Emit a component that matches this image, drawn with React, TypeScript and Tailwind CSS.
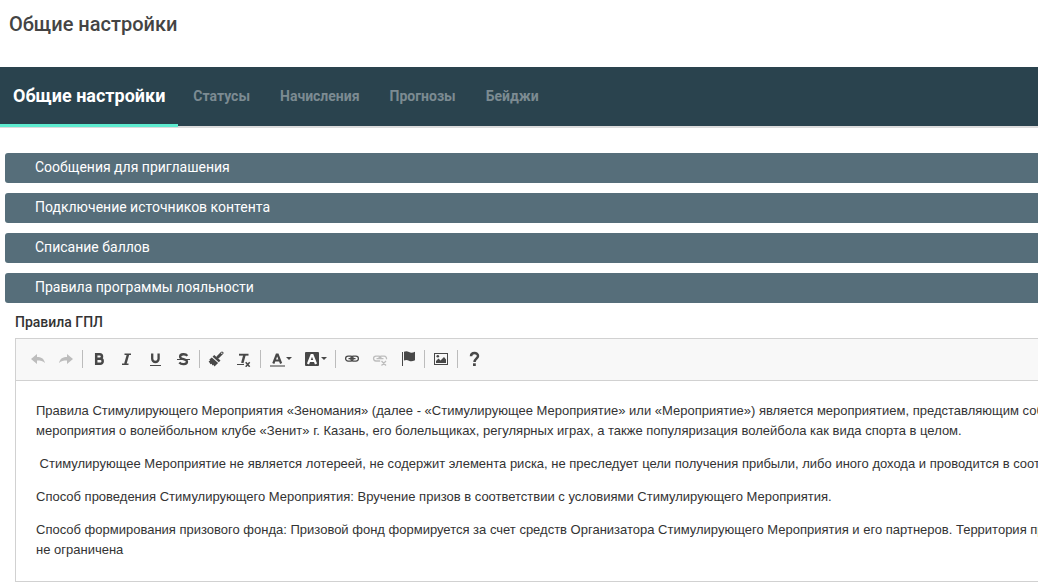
import { useState } from "react";
import type { ReactNode } from "react";

const TABS = ["Общие настройки", "Статусы", "Начисления", "Прогнозы", "Бейджи"];

const SECTIONS = [
    "Сообщения для приглашения",
    "Подключение источников контента",
    "Списание баллов",
    "Правила программы лояльности",
];

function Icon({ children }: { children: ReactNode }) {
    return (
        <svg width="16" height="16" viewBox="0 0 16 16" fill="none" stroke="none" aria-hidden="true">
            {children}
        </svg>
    );
}

function ToolButton({ label, disabled, children }: { label: string; disabled?: boolean; children: ReactNode }) {
    return (
        <button type="button" aria-label={label} title={label} disabled={disabled} className="flex h-7 w-7 items-center justify-center rounded-xs text-[#484848] enabled:hover:bg-[#e5e5e5] disabled:text-[#bdbdbd]">
            <Icon>{children}</Icon>
        </button>
    );
}

function MenuButton({ label, children }: { label: string; children: ReactNode }) {
    return (
        <button type="button" aria-label={label} title={label} aria-haspopup="true" className="flex h-7 w-[35px] items-center gap-px pl-1.5 rounded-xs text-[#484848] hover:bg-[#e5e5e5]">
            <Icon>{children}</Icon>
            <svg width="6" height="4" viewBox="0 0 6 4" fill="currentColor" aria-hidden="true"><path d="M0 0h6L3 3z" /></svg>
        </button>
    );
}

function Separator() {
    return <span className="mx-0.5 h-[18px] w-px bg-[#bcbcbc]" />;
}

function Toolbar() {
    return (
        <div role="toolbar" aria-label="Панель инструментов" className="flex h-[42px] items-center border-b border-[#d1d1d1] bg-[#f8f8f8] pb-px pl-2">
            <ToolButton label="Отменить" disabled>
                <path fill="currentColor" d="M1 8l6-5v3c4 0 7 1.500 8 6-2-2-4.500-2.500-8-2.500V13z" />
            </ToolButton>
            <ToolButton label="Повторить" disabled>
                <path fill="currentColor" d="M15 8L9 3v3c-4 0-7 1.500-8 6 2-2 4.500-2.500 8-2.500V13z" />
            </ToolButton>
            <Separator />
            <ToolButton label="Полужирный">
                <path stroke="currentColor" strokeWidth="2.500" d="M5.200 3.200h3.500a2.200 2.200 0 0 1 0 4.600H5.200h4a2.400 2.400 0 0 1 0 5H5.200z" />
            </ToolButton>
            <ToolButton label="Курсив">
                <path stroke="currentColor" strokeWidth="1.600" d="M5.500 3.300h6.500M3 13.200h6.500" />
                <path stroke="currentColor" strokeWidth="2.500" d="M9 3.500L6.300 13" />
            </ToolButton>
            <ToolButton label="Подчеркнутый">
                <path stroke="currentColor" strokeWidth="2.300" d="M5.200 2.500v5.300a3.200 3.200 0 0 0 6.400 0V2.500" />
                <path fill="currentColor" d="M3 14h11v1H3z" />
            </ToolButton>
            <ToolButton label="Зачеркнутый">
                <path stroke="currentColor" strokeWidth="2.300" d="M12.300 4.800C10.800 2.600 5.100 2.600 5.100 5.700c0 3.200 6.900 1.800 6.900 5 0 3-5.700 3.100-7.700.8" />
                <path fill="currentColor" d="M2 8h13v1H2z" />
            </ToolButton>
            <Separator />
            <ToolButton label="Копировать форматирование">
                <path stroke="currentColor" strokeWidth="3" strokeLinecap="round" d="M10 6l4-4" />
                <circle cx="13.800" cy="2.200" r="0.700" fill="#f8f8f8" />
                <path fill="currentColor" d="M6.200 4l6.300 5.500-1.700 1.800L4.600 5.700zM3.800 6.400l6.300 5.700L6.500 15.500l-1.200-1.700-.9.700-.7-1.700-1.200.5L.6 10.300 2 9.700 1.400 8.500z" />
            </ToolButton>
            <ToolButton label="Убрать форматирование">
                <path stroke="currentColor" strokeWidth="1.900" d="M3 3.700h9.500" />
                <path stroke="currentColor" strokeWidth="2.500" d="M8.600 3.500L6.300 12" />
                <path fill="currentColor" d="M1 13h7v1H1z" />
                <path stroke="currentColor" strokeWidth="1.500" d="M9.700 11.200l4 4.600M13.700 11.200l-4 4.600" />
            </ToolButton>
            <Separator />
            <MenuButton label="Цвет текста">
                <path stroke="currentColor" strokeWidth="2.200" d="M4.300 12.500l3.400-9h1l3.400 9M5.500 9.500h5.500" />
                <path fill="#999999" d="M1 14h15v2H1z" />
            </MenuButton>
            <MenuButton label="Цвет фона">
                <rect x="1" y="1" width="14" height="14" rx="1" fill="currentColor" />
                <path stroke="#ffffff" strokeWidth="2.200" d="M4 13l3.500-9h1l3.500 9M5.500 10h5" />
            </MenuButton>
            <Separator />
            <ToolButton label="Вставить ссылку">
                <rect x="1.600" y="5.100" width="7.500" height="5" rx="2.500" stroke="currentColor" strokeWidth="1.300" />
                <rect x="6.900" y="5.100" width="7.500" height="5" rx="2.500" stroke="currentColor" strokeWidth="1.300" />
                <path stroke="currentColor" strokeWidth="1.300" d="M4.500 7.600h7" />
            </ToolButton>
            <ToolButton label="Убрать ссылку" disabled>
                <path stroke="currentColor" strokeWidth="1.300" d="M8.200 10H4a2.400 2.400 0 0 1 0-4.900h2.600a2.400 2.400 0 0 1 2.400 2.400M7 7.500a2.400 2.400 0 0 1 2.400-2.400H12a2.400 2.400 0 0 1 2.400 3.200M4.500 7.600h7M9.500 10l4.500 4.500M14 10l-4.500 4.500" />
            </ToolButton>
            <ToolButton label="Вставить якорь">
                <path fill="currentColor" d="M2 1h1v14H2zM4 .8c2-1 3.500-.5 5 .3 1.700.9 3.500.8 6-.3V9.300c-2.500 1.300-4.500 1.300-6 .5-1.500-.8-3-1.300-5-.3z" />
            </ToolButton>
            <Separator />
            <ToolButton label="Изображение">
                <path fill="currentColor" fillRule="evenodd" d="M1 2h14v12H1zM2 3v10h12V3z" />
                <path fill="currentColor" d="M3 12V10l2.500-2.500L7.500 9.500 11 6l2 2.500V12z" />
                <circle cx="4.800" cy="5.300" r="1.300" fill="currentColor" />
            </ToolButton>
            <Separator />
            <ToolButton label="О редакторе">
                <path stroke="currentColor" strokeWidth="2.500" d="M5 5.300c0-4.500 7-4.300 7-.4 0 2.600-3.500 2.900-3.500 6" />
                <path fill="currentColor" d="M7 12.300h2.800V15H7z" />
            </ToolButton>
        </div>
    );
}

export default function App() {
    const [activeTab, setActiveTab] = useState(TABS[0]);
    const [openSection, setOpenSection] = useState(SECTIONS[3]);

    return (
        <div className="min-h-screen overflow-x-hidden bg-white font-['Roboto',sans-serif] text-[#333333]">
            <header className="flex h-[67px] items-start px-[9px] pt-2.5">
                <h1 className="text-[20px] leading-7 font-medium text-[#444444]">Общие настройки</h1>
            </header>

            <nav role="tablist" className="flex h-[61px] border-b-2 border-[#dcdcdc] bg-[#2a434e]">
                {TABS.map((tab) => (
                    <button
                        key={tab}
                        type="button"
                        role="tab"
                        aria-selected={tab === activeTab}
                        onClick={() => setActiveTab(tab)}
                        className={`font-bold whitespace-nowrap ${tab === activeTab ? "h-[60px] border-b-3 border-[#5eecd0] px-[13px] text-[18px] text-white" : "h-[59px] px-[15px] text-[14px] text-[#7c8b92]"}`}
                    >
                        {tab}
                    </button>
                ))}
            </nav>

            <main className="pt-[25px] pl-[5px]">
                <div className="flex flex-col gap-2.5">
                    {SECTIONS.map((section) => (
                        <button
                            key={section}
                            type="button"
                            aria-expanded={section === openSection}
                            onClick={() => setOpenSection(section)}
                            className="h-[30px] rounded-l-[3px] bg-[#566e7a] pb-0.5 pl-[30px] text-left text-[14px] text-white"
                        >
                            {section}
                        </button>
                    ))}
                </div>

                <section className="pt-2.5 pl-2.5">
                    <h2 id="rules-label" className="text-[14px] leading-[18px] font-medium">Правила ГПЛ</h2>
                    <div className="mt-[7px] overflow-hidden border border-r-0 border-[#d1d1d1]">
                        <Toolbar />
                        <div
                            role="textbox"
                            aria-multiline="true"
                            aria-labelledby="rules-label"
                            contentEditable
                            suppressContentEditableWarning
                            spellCheck={false}
                            className="flex flex-col gap-[13px] px-5 pt-5 pb-[21px] font-['Liberation_Sans',Arial,sans-serif] text-[13px] leading-5 whitespace-nowrap outline-none"
                        >
                            <p>
                                Правила Стимулирующего Мероприятия «Зеномания» (далее - «Стимулирующее Мероприятие» или «Мероприятие») является мероприятием, представляющим собой
                                <br />
                                мероприятия о волейбольном клубе «Зенит» г. Казань, его болельщиках, регулярных играх, а также популяризация волейбола как вида спорта в целом.
                            </p>
                            <p>&nbsp;Стимулирующее Мероприятие не является лотереей, не содержит элемента риска, не преследует цели получения прибыли, либо иного дохода и проводится в соответствии</p>
                            <p>Способ проведения Стимулирующего Мероприятия: Вручение призов в соответствии с условиями Стимулирующего Мероприятия.</p>
                            <p>
                                Способ формирования призового фонда: Призовой фонд формируется за счет средств Организатора Стимулирующего Мероприятия и его партнеров. Территория проведения
                                <br />
                                не ограничена
                            </p>
                        </div>
                    </div>
                </section>
            </main>
        </div>
    );
}
